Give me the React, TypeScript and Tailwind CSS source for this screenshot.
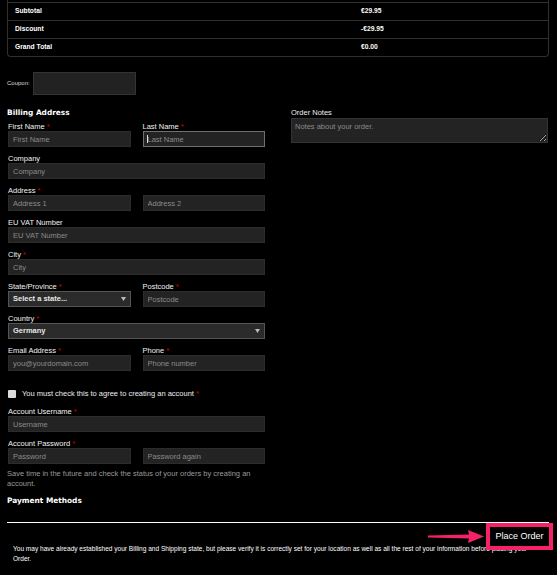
import React from 'react';

const Req: React.FC = () => <span className="text-[#d40000]"> *</span>;

const Label: React.FC<{ text?: string; req?: boolean }> = ({ text, req }) => (
    <div className="h-[9px] leading-[9px] text-[7.5px] text-[#f2f2f2] whitespace-nowrap">
        {text}
        {req && <Req />}
    </div>
);

const inputCls =
    'block w-full h-[16px] bg-[#232323] border border-[#2c2c2c] px-[4px] text-[7.5px] text-[#ddd] placeholder:text-[#8a8a8a] outline-none';

const TextInput: React.FC<{ placeholder: string; focused?: boolean }> = ({ placeholder, focused }) => (
    <div className="relative">
        <input
            placeholder={placeholder}
            className={focused ? inputCls + ' !border-[#6f6f6f]' : inputCls}
        />
        {focused && <span className="absolute left-[4px] top-[4px] w-px h-[8px] bg-[#ddd]" />}
    </div>
);

const SelectBox: React.FC<{ value: string }> = ({ value }) => (
    <div className="flex items-center justify-between h-[16px] bg-[#2b2b2b] border border-[#555] pl-[4px] pr-[4px]">
        <span className="text-[7.5px] font-bold text-[#e6e6e6]">{value}</span>
        <svg width="5" height="4" viewBox="0 0 5 4">
            <polygon points="0,0 5,0 2.5,4" fill="#bbb" />
        </svg>
    </div>
);

const SummaryRow: React.FC<{ label: string; value: string }> = ({ label, value }) => (
    <div className="flex items-center h-[18px] border-t border-[#303030] px-[7px] text-[6.7px] font-bold">
        <span className="w-[346px]">{label}</span>
        <span>{value}</span>
    </div>
);

const App: React.FC = () => {
    return (
        <div className="relative h-[575px] w-[557px] overflow-hidden bg-black text-white font-['Liberation_Sans',Arial,sans-serif]">
            <div className="px-[7px]">
                {/* order summary */}
                <div className="w-[542px] pt-[2px] border-x border-b border-[#303030] rounded-b-[4px]">
                    <SummaryRow label="Subtotal" value="€29.95" />
                    <SummaryRow label="Discount" value="-€29.95" />
                    <SummaryRow label="Grand Total" value="€0.00" />
                </div>

                <div className="mt-[15px] flex items-center gap-[3px]">
                    <span className="text-[6px] text-[#ddd]">Coupon:</span>
                    <input className="w-[103px] h-[23px] bg-[#222] border border-[#333] outline-none" />
                </div>

                <div className="mt-[12px] flex">
                    <div className="w-[258px]">
                        <h2 className="h-[12px] leading-[12px] text-[7.4px] font-bold font-['DejaVu_Sans',Verdana,sans-serif]">Billing Address</h2>
                        <div className="ml-px mt-[3px] flex flex-col gap-[7px]">
                            <div className="grid grid-cols-2 gap-x-[12px]">
                                <div>
                                    <Label text="First Name" req />
                                    <TextInput placeholder="First Name" />
                                </div>
                                <div>
                                    <Label text="Last Name" req />
                                    <TextInput placeholder="Last Name" focused />
                                </div>
                            </div>
                            <div>
                                <Label text="Company" />
                                <TextInput placeholder="Company" />
                            </div>
                            <div>
                                <Label text="Address" req />
                                <div className="grid grid-cols-2 gap-x-[12px]">
                                    <TextInput placeholder="Address 1" />
                                    <TextInput placeholder="Address 2" />
                                </div>
                            </div>
                            <div>
                                <Label text="EU VAT Number" />
                                <TextInput placeholder="EU VAT Number" />
                            </div>
                            <div>
                                <Label text="City" req />
                                <TextInput placeholder="City" />
                            </div>
                            <div className="grid grid-cols-2 gap-x-[12px]">
                                <div>
                                    <Label text="State/Province" req />
                                    <SelectBox value="Select a state..." />
                                </div>
                                <div>
                                    <Label text="Postcode" req />
                                    <TextInput placeholder="Postcode" />
                                </div>
                            </div>
                            <div>
                                <Label text="Country" req />
                                <SelectBox value="Germany" />
                            </div>
                            <div className="grid grid-cols-2 gap-x-[12px]">
                                <div>
                                    <Label text="Email Address" req />
                                    <TextInput placeholder="you@yourdomain.com" />
                                </div>
                                <div>
                                    <Label text="Phone" req />
                                    <TextInput placeholder="Phone number" />
                                </div>
                            </div>
                        </div>

                        <div className="ml-px mt-[18px] flex items-center h-[10px] gap-[6px]">
                            <span className="w-[8px] h-[8px] rounded-[1px] bg-[#dcdcdc]" />
                            <span className="text-[7.5px] text-[#eee]">
                                You must check this to agree to creating an account<Req />
                            </span>
                        </div>

                        <div className="ml-px mt-[8px]">
                            <Label text="Account Username" req />
                            <TextInput placeholder="Username" />
                        </div>
                        <div className="ml-px mt-[7px]">
                            <Label text="Account Password" req />
                            <div className="grid grid-cols-2 gap-x-[12px]">
                                <TextInput placeholder="Password" />
                                <TextInput placeholder="Password again" />
                            </div>
                        </div>
                        <p className="mt-[5px] text-[7.5px] leading-[10px] text-[#9a9a9a] w-[250px]">
                            Save time in the future and check the status of your orders by creating an account.
                        </p>
                    </div>

                    <div className="ml-[26px] w-[257px]">
                        <div className="h-[11px] leading-[11px] text-[7.5px] text-[#eee]">Order Notes</div>
                        <textarea
                            placeholder="Notes about your order."
                            className="block w-full h-[25px] bg-[#232323] border border-[#333] px-[3px] pt-[3px] text-[7.5px] leading-[9px] placeholder:text-[#8a8a8a] outline-none"
                        />
                    </div>
                </div>

                <h2 className="mt-[6px] h-[12px] leading-[12px] text-[7.4px] font-bold font-['DejaVu_Sans',Verdana,sans-serif]">Payment Methods</h2>
                <div className="mt-[15px] h-px w-[542px] bg-white" />
                <p className="mt-[21px] pl-[6px] w-[524px] text-[6.55px] leading-[10px] text-white">
                    You may have already established your Billing and Shipping state, but please verify it is correctly set for your location as well as all the rest of your information before placing your Order.
                </p>
            </div>

            {/* annotation: arrow + highlighted button */}
            <svg className="absolute left-[428px] top-[530px]" width="56" height="13" viewBox="0 0 56 13">
                <polygon points="0,5.6 41,4.6 40,0 56,6.5 40,13 41,8.4 0,7.4" fill="#f5226a" />
            </svg>
            <div className="absolute left-[486px] top-[523px] w-[67px] h-[27px] border-[4px] border-[#f5226a] bg-black flex items-center justify-center">
                <span className="text-[9px] text-white">Place Order</span>
            </div>
        </div>
    );
};

export default App;
